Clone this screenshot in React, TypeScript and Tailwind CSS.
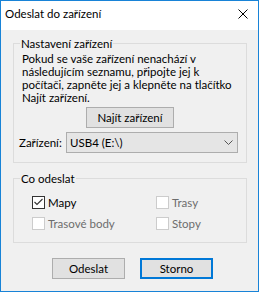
import React from "react";

const font = { fontFamily: 'Lato, "Noto Sans", "Liberation Sans", sans-serif' };

function Check({ checked, disabled, label }: { checked?: boolean; disabled?: boolean; label: string }) {
  return (
    <div className="flex items-center h-[13px]">
      <span
        className={`w-[13px] h-[13px] shrink-0 border bg-white ${disabled ? "border-[#cccccc]" : "border-[#333333]"}`}
      >
        {checked && (
          <svg width="11" height="11" viewBox="0 0 11 11" className="block">
            <path d="M1.5 5 L4 7.5 L9.5 2" fill="none" stroke="#333" strokeWidth="1.1" />
          </svg>
        )}
      </span>
      <span className={`ml-[3px] ${disabled ? "text-[#6d6d6d]" : "text-black"}`}>{label}</span>
    </div>
  );
}

function Group({ title, className = "", children }: { title: string; className?: string; children: React.ReactNode }) {
  return (
    <div className={`relative border border-[#dcdcdc] ${className}`}>
      <span className="absolute left-[6px] -top-[8px] px-[1px] bg-[#f0f0f0] leading-[15px]">{title}</span>
      {children}
    </div>
  );
}

export default function App() {
  return (
    <div
      className="w-[259px] h-[292px] border border-[#1883d7] bg-[#f0f0f0] flex flex-col text-[11.5px] leading-[13px] text-black"
      style={font}
    >
      <div className="h-[29px] shrink-0 bg-white flex items-start justify-between pt-[6px] pl-[4px] pr-[10px]">
        <span>Odeslat do zařízení</span>
        <svg width="10" height="10" viewBox="0 0 10 10" className="mt-[2px]">
          <path d="M0.5 0.5 L9.5 9.5 M9.5 0.5 L0.5 9.5" stroke="#000" strokeWidth="1" />
        </svg>
      </div>

      <div className="pl-[12px] pr-[11px] flex flex-col">
        <Group title="Nastavení zařízení" className="mt-[13px] pt-[8px] pl-[8px] pr-[8px] pb-[9px]">
          <p>
            Pokud se vaše zařízení nenachází v následujícím seznamu, připojte jej k počítači, zapněte jej a klepněte na tlačítko
            Najít zařízení.
          </p>
          <div className="flex justify-center mt-[3px]">
            <button className="w-[88px] h-[21px] bg-[#e1e1e1] border border-[#adadad]">Najít zařízení</button>
          </div>
          <div className="flex items-center mt-[4px] -ml-[3px]">
            <span className="w-[47px]">Zařízení:</span>
            <div className="flex-1 h-[21px] bg-[#e5e5e5] border border-[#adadad] flex items-center justify-between pl-[3px] pr-[4px]">
              <span>USB4 (E:\)</span>
              <svg width="9" height="5" viewBox="0 0 9 5">
                <path d="M0.5 0.5 L4.5 4.5 L8.5 0.5" fill="none" stroke="#555" strokeWidth="1" />
              </svg>
            </div>
          </div>
        </Group>

        <Group title="Co odeslat" className="mt-[15px] pt-[17px] pb-[12px] pl-[18px]">
          <div className="grid grid-cols-[124px_1fr] gap-y-[8px]">
            <Check checked label="Mapy" />
            <Check disabled label="Trasy" />
            <Check disabled label="Trasové body" />
            <Check disabled label="Stopy" />
          </div>
        </Group>

        <div className="flex gap-[15px] mt-[15px] pl-[39px]">
          <button className="w-[73px] h-[21px] bg-[#e1e1e1] border border-[#adadad]">Odeslat</button>
          <button className="w-[73px] h-[21px] bg-[#e1e1e1] border-2 border-[#0078d7]">Storno</button>
        </div>
      </div>
    </div>
  );
}
